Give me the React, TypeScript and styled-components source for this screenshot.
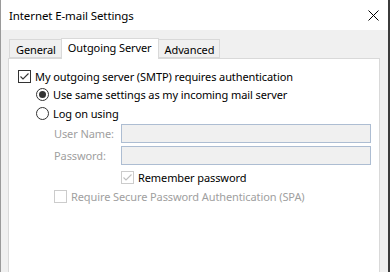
import styled, { createGlobalStyle } from "styled-components";

const GlobalStyle = createGlobalStyle`
  html, body {
    margin: 0;
    padding: 0;
    background: #3b3b3b;
  }
  body {
    font-family: "Noto Sans", "Open Sans", sans-serif;
    font-size: 11px;
    letter-spacing: -0.1px;
    color: #000;
  }
`;

const Window = styled.div`
  width: 387px;
  height: 272px;
  display: flex;
  flex-direction: column;
  border-left: 1px solid #9a9a9a;
  background: #f0f0f0;
  overflow: hidden;
`;

const TitleBar = styled.div`
  height: 30px;
  flex: none;
  background: #fff;
  display: flex;
  align-items: center;
  justify-content: space-between;
  padding: 0 9px 0 8px;
  font-size: 11.5px;
`;

const Body = styled.div`
  flex: 1;
  padding: 7px 8px 0 7px;
  display: flex;
  flex-direction: column;
`;

const Tabs = styled.div`
  display: flex;
  align-items: flex-end;
  padding-left: 1px;
  height: 21px;
  position: relative;
  z-index: 1;
`;

const Tab = styled.div<{ $active?: boolean }>`
  height: ${(p) => (p.$active ? 21 : 19)}px;
  box-sizing: border-box;
  padding: ${(p) => (p.$active ? "0 6px 0 6px" : "1px 5px 0 6px")};
  background: ${(p) => (p.$active ? "#fff" : "#f0f0f0")};
  border: 1px solid #d9d9d9;
  border-bottom: ${(p) => (p.$active ? "none" : "1px solid #d9d9d9")};
  margin-left: ${(p) => (p.$active ? "-1px" : "0")};
  margin-right: ${(p) => (p.$active ? "-1px" : "0")};
  margin-bottom: ${(p) => (p.$active ? "-1px" : "0")};
  line-height: 17px;
  position: relative;
  z-index: ${(p) => (p.$active ? 2 : 1)};
`;

const Panel = styled.div`
  flex: 1;
  background: #fff;
  border: 1px solid #d9d9d9;
  border-bottom: none;
  padding: 8px 0 0 9px;
  display: flex;
  flex-direction: column;
`;

const Row = styled.div<{ $indent?: number; $top?: number; $tall?: boolean }>`
  display: flex;
  align-items: center;
  height: ${(p) => (p.$tall ? 19 : 18)}px;
  margin-left: ${(p) => p.$indent ?? 0}px;
  margin-top: ${(p) => p.$top ?? 0}px;
  white-space: nowrap;
`;

const Label = styled.span<{ $disabled?: boolean }>`
  color: ${(p) => (p.$disabled ? "#a0a0a0" : "#000")};
  margin-left: 4px;
`;

const FieldLabel = styled.span`
  color: #a0a0a0;
  width: 67px;
`;

const Field = styled.div`
  width: 250px;
  height: 19px;
  box-sizing: border-box;
  border: 1px solid #adbdd2;
  background: #f0f0f0;
`;

const Box = styled.span<{ $disabled?: boolean }>`
  width: 13px;
  height: 13px;
  box-sizing: border-box;
  border: 1px solid ${(p) => (p.$disabled ? "#cccccc" : "#333333")};
  background: #fff;
  display: inline-flex;
  align-items: center;
  justify-content: center;
  flex: none;
`;

const Radio = styled.span`
  width: 13px;
  height: 13px;
  box-sizing: border-box;
  border: 1px solid #333;
  border-radius: 50%;
  display: inline-flex;
  align-items: center;
  justify-content: center;
  flex: none;
`;

const Dot = styled.span`
  width: 7px;
  height: 7px;
  border-radius: 50%;
  background: #333;
`;

const Check = ({ color }: { color: string }) => (
  <svg width="11" height="11" viewBox="0 0 11 11">
    <path d="M1.5 5.5 L4 8 L9.5 2.5" fill="none" stroke={color} strokeWidth="1.1" />
  </svg>
);

const CloseIcon = () => (
  <svg width="11" height="11" viewBox="0 0 11 11">
    <path d="M0.5 0.5 L10.5 10.5 M10.5 0.5 L0.5 10.5" stroke="#000" strokeWidth="1" />
  </svg>
);

export default function App() {
  return (
    <>
      <GlobalStyle />
      <Window>
        <TitleBar>
          <span>Internet E-mail Settings</span>
          <CloseIcon />
        </TitleBar>
        <Body>
          <Tabs>
            <Tab>General</Tab>
            <Tab $active>Outgoing Server</Tab>
            <Tab>Advanced</Tab>
          </Tabs>
          <Panel>
            <Row>
              <Box>
                <Check color="#333" />
              </Box>
              <Label>My outgoing server (SMTP) requires authentication</Label>
            </Row>
            <Row $indent={18}>
              <Radio>
                <Dot />
              </Radio>
              <Label>Use same settings as my incoming mail server</Label>
            </Row>
            <Row $indent={18} $top={1}>
              <Radio />
              <Label>Log on using</Label>
            </Row>
            <Row $indent={36} $top={2} $tall>
              <FieldLabel>User Name:</FieldLabel>
              <Field />
            </Row>
            <Row $indent={36} $top={3} $tall>
              <FieldLabel>Password:</FieldLabel>
              <Field />
            </Row>
            <Row $indent={103} $top={3}>
              <Box $disabled>
                <Check color="#bfbfbf" />
              </Box>
              <Label>Remember password</Label>
            </Row>
            <Row $indent={36} $top={1}>
              <Box $disabled />
              <Label $disabled>Require Secure Password Authentication (SPA)</Label>
            </Row>
          </Panel>
        </Body>
      </Window>
    </>
  );
}
